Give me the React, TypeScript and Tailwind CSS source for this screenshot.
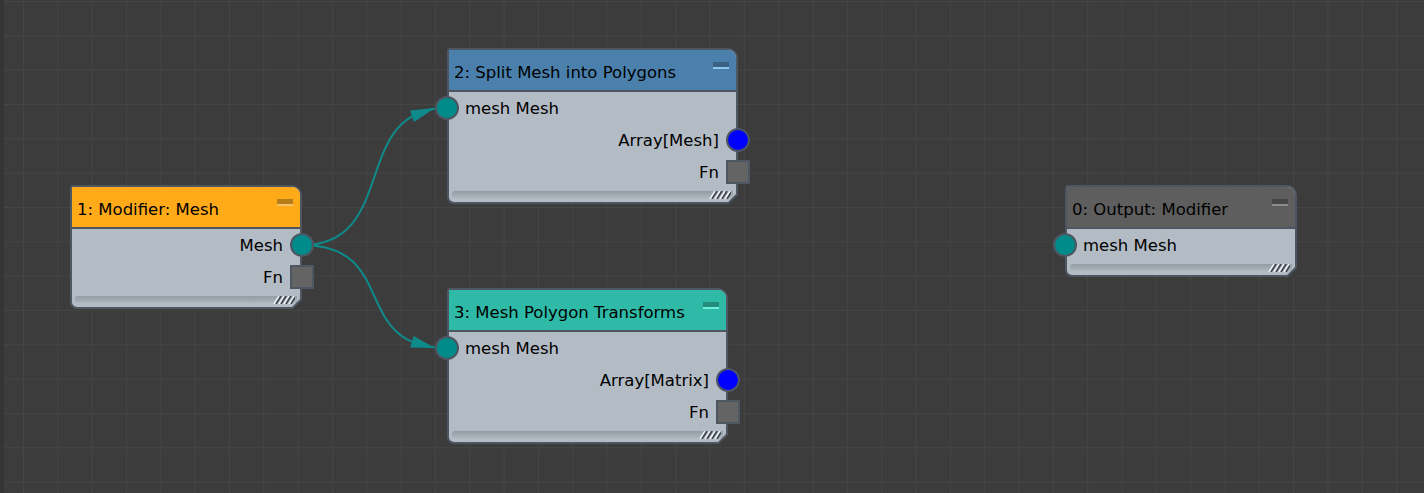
import type { ReactNode } from 'react';

type Row = { label: string; side: 'in' | 'out'; kind: 'circle' | 'square'; fill?: string };

function Hatch() {
  return (
    <svg width="24" height="8" viewBox="0 0 24 8" className="absolute right-[2px] top-0">
      <path d="M3 8 L8 0 M8 8 L13 0 M13 8 L18 0 M18 8 L23 0" stroke="#eef2f5" strokeWidth="1.6" />
      <path d="M5 8 L10 0 M10 8 L15 0 M15 8 L20 0 M20 8 L24 1.5" stroke="#3e4650" strokeWidth="1.6" />
    </svg>
  );
}

function Chamfer() {
  return (
    <svg width="12" height="12" viewBox="0 0 12 12" className="absolute -bottom-[2px] -right-[2px]">
      <polygon points="12,2 12,12 2,12" fill="#3c3c3c" />
      <line x1="12.5" y1="1" x2="1" y2="12.5" stroke="#4d5661" strokeWidth="2" />
    </svg>
  );
}

function PortRow({ row }: { row: Row }) {
  const fill = row.fill ?? 'bg-[#008b8b]';
  return (
    <div
      className={
        row.side === 'in'
          ? 'relative flex h-[32px] items-center pl-[16px]'
          : 'relative flex h-[32px] items-center justify-end pr-[17px]'
      }
    >
      <span className="pt-[2px] leading-none">{row.label}</span>
      <span
        className={[
          'absolute top-1/2 size-[24px] -translate-y-1/2 border-2 border-[#4d5661]',
          row.side === 'in' ? '-left-[14px]' : '-right-[14px]',
          row.kind === 'circle' ? 'rounded-full ' + fill : 'bg-[#646464]',
        ].join(' ')}
      />
    </div>
  );
}

function Node({
  pos,
  title,
  head,
  barDark,
  barLight,
  rows,
}: {
  pos: string;
  title: string;
  head: string;
  barDark: string;
  barLight: string;
  rows: Row[];
}) {
  return (
    <div
      className={`absolute ${pos} rounded-tl-[3px] rounded-tr-[10px] rounded-bl-[7px] border-2 border-[#4d5661] bg-[#b3bcc5] text-[16.5px] text-black`}
    >
      <div
        className={`flex h-[42px] items-start justify-between rounded-tl-[1px] rounded-tr-[8px] border-b-2 border-[#4d5661] pl-[5px] pr-[7px] ${head}`}
      >
        <span className="pt-[15px] leading-none">{title}</span>
        <span className="mt-[12px] flex w-[16px] flex-col">
          <span className={`h-[5px] ${barDark}`} />
          <span className={`h-[2px] ${barLight}`} />
        </span>
      </div>
      {rows.map((r, i) => (
        <PortRow key={i} row={r} />
      ))}
      <div className="flex h-[14px] items-start px-[3px] pt-[3px]">
        <div className="relative h-[7px] flex-1 rounded-l-[3px] bg-gradient-to-b from-[#939ba4] to-[#adb5bd]">
          <Hatch />
        </div>
      </div>
      <Chamfer />
    </div>
  );
}

function Links(): ReactNode {
  return (
    <svg width="1424" height="493" className="absolute left-0 top-0">
      <g fill="none" stroke="#0f8a8a" strokeWidth="2">
        <path d="M302 245 C400 245 349 108 447 108" />
        <path d="M302 245 C400 245 349 348 447 348" />
      </g>
      <g fill="#0f8a8a">
        <polygon points="435,108 410,110.6 414,121.9" />
        <polygon points="435,348 413.6,335.9 410.4,347.5" />
      </g>
    </svg>
  );
}

export default function App() {
  return (
    <div className="relative h-[493px] w-[1424px] overflow-hidden bg-[#3c3c3c] bg-[linear-gradient(to_right,#454545_1px,transparent_1px),linear-gradient(to_bottom,#454545_1px,transparent_1px)] bg-[size:34.33px_34.33px] bg-[position:23px_1px] font-['DejaVu_Sans',sans-serif] shadow-[inset_4px_0_0_#353535]">
      <Links />
      <Node
        pos="left-[70px] top-[185px] w-[232px]"
        title="1: Modifier: Mesh"
        head="bg-[#ffaa19]"
        barDark="bg-[#b97d17]"
        barLight="bg-[#f3c46a]"
        rows={[
          { label: 'Mesh', side: 'out', kind: 'circle' },
          { label: 'Fn', side: 'out', kind: 'square' },
        ]}
      />
      <Node
        pos="left-[447px] top-[48px] w-[291px]"
        title="2: Split Mesh into Polygons"
        head="bg-[#4b80ad]"
        barDark="bg-[#3a6282]"
        barLight="bg-[#8cc6ee]"
        rows={[
          { label: 'mesh Mesh', side: 'in', kind: 'circle' },
          { label: 'Array[Mesh]', side: 'out', kind: 'circle', fill: 'bg-[#0000ff]' },
          { label: 'Fn', side: 'out', kind: 'square' },
        ]}
      />
      <Node
        pos="left-[447px] top-[288px] w-[281px]"
        title="3: Mesh Polygon Transforms"
        head="bg-[#2fbaa7]"
        barDark="bg-[#238c7d]"
        barLight="bg-[#6ff0dc]"
        rows={[
          { label: 'mesh Mesh', side: 'in', kind: 'circle' },
          { label: 'Array[Matrix]', side: 'out', kind: 'circle', fill: 'bg-[#0000ff]' },
          { label: 'Fn', side: 'out', kind: 'square' },
        ]}
      />
      <Node
        pos="left-[1065px] top-[185px] w-[232px]"
        title="0: Output: Modifier"
        head="bg-[#5e5e5e]"
        barDark="bg-[#474747]"
        barLight="bg-[#8c8c8c]"
        rows={[{ label: 'mesh Mesh', side: 'in', kind: 'circle' }]}
      />
    </div>
  );
}
